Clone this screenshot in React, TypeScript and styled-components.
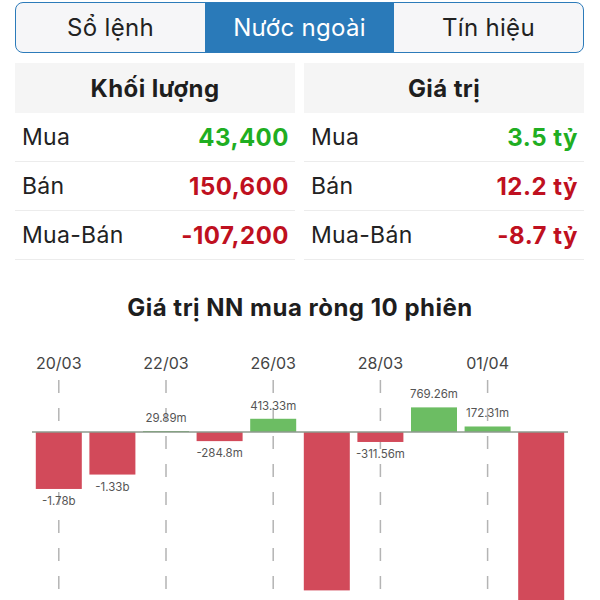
import React from 'react';
import styled, { createGlobalStyle } from 'styled-components';

const GlobalStyle = createGlobalStyle`
  html, body {
    margin: 0;
    padding: 0;
    background: #ffffff;
    overflow: hidden;
    font-family: Inter, Roboto, "Noto Sans", sans-serif;
    color: #222;
  }
`;

const Page = styled.div`
  width: 600px;
  height: 600px;
  overflow: hidden;
`;

const Top = styled.div`
  padding: 2px 16px 0 15px;
`;

const Segments = styled.div`
  display: grid;
  grid-template-columns: 1fr 1fr 1fr;
  height: 51px;
  box-sizing: border-box;
  border: 1.5px solid #2c7bba;
  border-radius: 8px;
  overflow: hidden;
  background: #f6f6f8;
`;

const Segment = styled.div<{ $active?: boolean }>`
  display: flex;
  align-items: center;
  justify-content: center;
  font-size: 24px;
  letter-spacing: 0.3px;
  color: ${(p) => (p.$active ? '#ffffff' : '#222')};
  background: ${(p) => (p.$active ? '#2a7ab9' : 'transparent')};
`;

const Tables = styled.div`
  display: grid;
  grid-template-columns: 1fr 1fr;
  column-gap: 9px;
  margin-top: 10px;
`;

const Column = styled.div`
  display: flex;
  flex-direction: column;
`;

const Header = styled.div`
  height: 50px;
  display: flex;
  align-items: center;
  justify-content: center;
  background: #f5f5f5;
  font-size: 24px;
  font-weight: 700;
  letter-spacing: 0.4px;
  color: #1e1e1e;
`;

const Row = styled.div`
  height: 48px;
  display: flex;
  align-items: center;
  justify-content: space-between;
  padding: 0 6px 0 7px;
  border-bottom: 1px solid #ececec;
  font-size: 23px;
  letter-spacing: 0.3px;
`;

const Label = styled.span`
  color: #222;
`;

const Value = styled.span<{ $tone: 'up' | 'down' }>`
  font-size: 24px;
  font-weight: 700;
  letter-spacing: 0.5px;
  color: ${(p) => (p.$tone === 'up' ? '#1fae22' : '#bf1020')};
`;

const ChartTitle = styled.div`
  margin-top: 33px;
  height: 30px;
  line-height: 30px;
  text-align: center;
  font-size: 24px;
  font-weight: 700;
  letter-spacing: 0.5px;
  color: #1e1e1e;
`;

const ChartSvg = styled.svg`
  display: block;
  width: 600px;
  height: 280px;
`;

type Stat = { label: string; value: string; tone: 'up' | 'down' };

const volume: Stat[] = [
  { label: 'Mua', value: '43,400', tone: 'up' },
  { label: 'Bán', value: '150,600', tone: 'down' },
  { label: 'Mua-Bán', value: '-107,200', tone: 'down' },
];

const worth: Stat[] = [
  { label: 'Mua', value: '3.5 tỷ', tone: 'up' },
  { label: 'Bán', value: '12.2 tỷ', tone: 'down' },
  { label: 'Mua-Bán', value: '-8.7 tỷ', tone: 'down' },
];

// giá trị mua ròng theo phiên, đơn vị tỷ; hai phiên lớn nhất thì nhãn nằm ngoài khung
const sessions: { v: number; text?: string }[] = [
  { v: -1.78, text: '-1.78b' },
  { v: -1.33, text: '-1.33b' },
  { v: 0.02989, text: '29.89m' },
  { v: -0.2848, text: '-284.8m' },
  { v: 0.41333, text: '413.33m' },
  { v: -4.95 },
  { v: -0.31156, text: '-311.56m' },
  { v: 0.76926, text: '769.26m' },
  { v: 0.17231, text: '172.31m' },
  { v: -5.6 },
];

const dates = ['20/03', '22/03', '26/03', '28/03', '01/04'];

const AXIS_LEFT = 32;
const AXIS_RIGHT = 568;
const BASE_Y = 109;
const PX_PER_B = 32;
const SLOT = (AXIS_RIGHT - AXIS_LEFT) / sessions.length;
const BAR_W = 46;

function StatColumn({ title, rows }: { title: string; rows: Stat[] }) {
  return (
    <Column>
      <Header>{title}</Header>
      {rows.map((r) => (
        <Row key={r.label}>
          <Label>{r.label}</Label>
          <Value $tone={r.tone}>{r.value}</Value>
        </Row>
      ))}
    </Column>
  );
}

function NetChart() {
  const centre = (i: number) => AXIS_LEFT + SLOT * i + SLOT / 2;
  return (
    <ChartSvg viewBox="0 0 600 280">
      {dates.map((d, k) => {
        const x = centre(k * 2);
        return (
          <g key={d}>
            <text x={x} y={46} textAnchor="middle" fontSize="16" fill="#444" fontFamily="Inter, sans-serif">
              {d}
            </text>
            <line
              x1={x}
              x2={x}
              y1={57}
              y2={280}
              stroke="#b4b4b4"
              strokeWidth="1.5"
              strokeDasharray="13 15"
            />
          </g>
        );
      })}
      {sessions.map((s, i) => {
        const h = Math.max(Math.abs(s.v) * PX_PER_B, 1);
        const x = centre(i) - BAR_W / 2;
        const up = s.v >= 0;
        const y = up ? BASE_Y - h : BASE_Y;
        const ly = up ? y - 9 : y + h + 16;
        return (
          <g key={i}>
            <rect x={x} y={y} width={BAR_W} height={h} fill={up ? '#6cbd63' : '#d24a5a'} />
            {s.text && (
              <text x={centre(i)} y={ly} textAnchor="middle" fontSize="11.5" fill="#555" fontFamily="Inter, sans-serif">
                {s.text}
              </text>
            )}
          </g>
        );
      })}
      <line x1={AXIS_LEFT} x2={AXIS_RIGHT} y1={BASE_Y} y2={BASE_Y} stroke="#8e9a8e" strokeWidth="1.5" />
    </ChartSvg>
  );
}

export default function App() {
  return (
    <Page>
      <GlobalStyle />
      <Top>
        <Segments>
          <Segment>Sổ lệnh</Segment>
          <Segment $active>Nước ngoài</Segment>
          <Segment>Tín hiệu</Segment>
        </Segments>
        <Tables>
          <StatColumn title="Khối lượng" rows={volume} />
          <StatColumn title="Giá trị" rows={worth} />
        </Tables>
      </Top>
      <ChartTitle>Giá trị NN mua ròng 10 phiên</ChartTitle>
      <NetChart />
    </Page>
  );
}
